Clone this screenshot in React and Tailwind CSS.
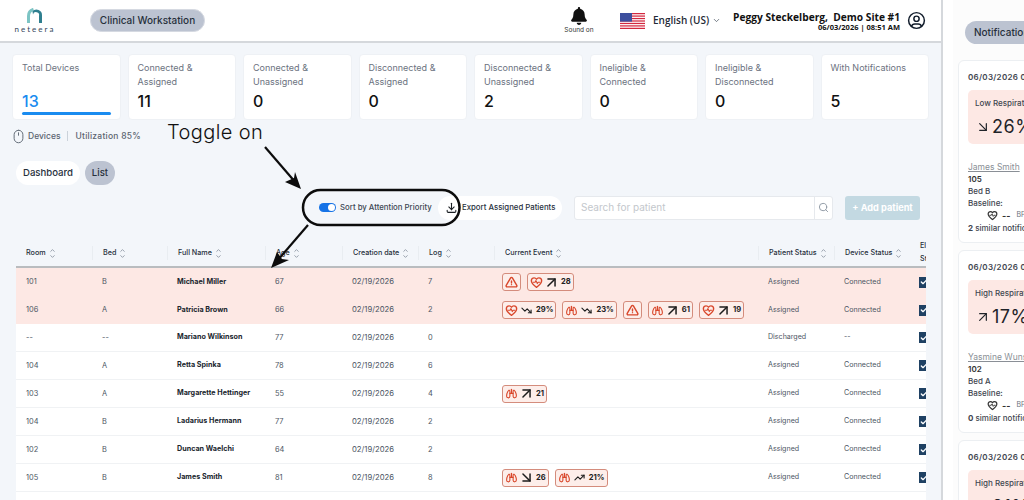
import React from 'react';
import { ArrowUpRight, ArrowDownRight, TrendingDown, TrendingUp, ChevronUp, ChevronDown, Search, Mouse, Check } from 'lucide-react';
import { TbLungs, TbAlertTriangle, TbDownload, TbUserCircle } from 'react-icons/tb';
import { FaBell } from 'react-icons/fa';

const stats = [
    { label: 'Total Devices', value: '13', active: true },
    { label: 'Connected & Assigned', value: '11' },
    { label: 'Connected & Unassigned', value: '0' },
    { label: 'Disconnected & Assigned', value: '0' },
    { label: 'Disconnected & Unassigned', value: '2' },
    { label: 'Ineligible & Connected', value: '0' },
    { label: 'Ineligible & Disconnected', value: '0' },
    { label: 'With Notifications', value: '5' },
];

const columns = ['Room', 'Bed', 'Full Name', 'Age', 'Creation date', 'Log', 'Current Event', 'Patient Status', 'Device Status'];

const rows = [
    { room: '101', bed: 'B', name: 'Michael Miller', age: '67', log: '7', alert: true, status: 'Assigned', device: 'Connected',
      events: [{ icon: 'alert' }, { icon: 'heart', trend: 'up', value: '28' }] },
    { room: '106', bed: 'A', name: 'Patricia Brown', age: '66', log: '2', alert: true, status: 'Assigned', device: 'Connected',
      events: [
          { icon: 'heart', trend: 'fall', value: '29%' },
          { icon: 'lungs', trend: 'fall', value: '23%' },
          { icon: 'alert' },
          { icon: 'lungs', trend: 'up', value: '61' },
          { icon: 'heart', trend: 'up', value: '19' },
      ] },
    { room: '--', bed: '--', name: 'Mariano Wilkinson', age: '77', log: '0', status: 'Discharged', device: '--', events: [] },
    { room: '104', bed: 'A', name: 'Retta Spinka', age: '78', log: '6', status: 'Assigned', device: 'Connected', events: [] },
    { room: '103', bed: 'A', name: 'Margarette Hettinger', age: '55', log: '4', status: 'Assigned', device: 'Connected',
      events: [{ icon: 'lungs', trend: 'up', value: '21' }] },
    { room: '104', bed: 'B', name: 'Ladarius Hermann', age: '77', log: '2', status: 'Assigned', device: 'Connected', events: [] },
    { room: '102', bed: 'B', name: 'Duncan Waelchi', age: '64', log: '2', status: 'Assigned', device: 'Connected', events: [] },
    { room: '105', bed: 'B', name: 'James Smith', age: '81', log: '8', status: 'Assigned', device: 'Connected',
      events: [{ icon: 'lungs', trend: 'down', value: '26' }, { icon: 'lungs', trend: 'rise', value: '21%' }] },
];

const notifications = [
    { date: '06/03/2026 06:30 AM', title: 'Low Respiratory Rate', dir: 'down', value: '26%', name: 'James Smith', room: '105', bed: 'Bed B', similar: '2' },
    { date: '06/03/2026 05:52 AM', title: 'High Respiratory Rate', dir: 'up', value: '17%', name: 'Yasmine Wunsch', room: '102', bed: 'Bed A', similar: '0' },
    { date: '06/03/2026 05:10 AM', title: 'High Respiratory Rate', dir: 'up', value: '21%', name: 'James Smith', room: '105', bed: 'Bed B', similar: '1' },
];

const gridCols = 'grid grid-cols-[76px_75px_98px_77px_76px_76px_264px_76px_76px_16px]';

const Logo = () => (
    <div className="flex flex-col items-center w-[42px]">
        <svg width="17" height="15" viewBox="0 0 17 15">
            <path d="M1.5 15V8a7 7 0 0 1 5-6.7" fill="none" stroke="#7cc4c4" strokeWidth="3" />
            <path d="M5.5 3.2a5.5 5.5 0 0 1 9.5 4V15h-3V8a3 3 0 0 0-6-1.5z" fill="#2f7f8f" />
        </svg>
        <span className="text-[8px] leading-[10px] tracking-[2px] text-[#33475b] mt-[1px] font-['Lato',sans-serif]">neteera</span>
    </div>
);

const Flag = () => (
    <svg width="25" height="16" viewBox="0 0 25 16">
        <rect width="25" height="16" fill="#fff" />
        {[0, 2.46, 4.92, 7.38, 9.84, 12.3, 14.76].map(y => (
            <rect key={y} y={y} width="25" height="1.24" fill="#d3283f" />
        ))}
        <rect width="12" height="8.6" fill="#3c4f9e" />
    </svg>
);

// closed heart with a pulse line through it
const HeartPulseIcon = ({ size = 13, className }) => (
    <svg width={size} height={size} viewBox="0 0 24 24" fill="none" stroke="currentColor" strokeLinecap="round" strokeLinejoin="round" className={className}>
        <path d="M12 21C7 17 2.5 13.5 2.5 8.6 2.5 5.5 5 3.4 7.6 3.4c1.9 0 3.4.9 4.4 2.6 1-1.7 2.5-2.6 4.4-2.6 2.6 0 5.1 2.1 5.1 5.2C21.5 13.5 17 17 12 21z" strokeWidth="2.6" />
        <path d="M6 11.5h3.5l1.5-3 2.5 5.5 1.500-2.500H18" strokeWidth="2" />
    </svg>
);

const SortIcon = () => (
    <span className="inline-flex flex-col ml-[3px] text-[#8b95a1]">
        <ChevronUp size={7} strokeWidth={3} className="-mb-[1px]" />
        <ChevronDown size={7} strokeWidth={3} />
    </span>
);

const EventBadge = ({ event }) => {
    const iconClass = 'text-[#d9472b] shrink-0';
    const arrowProps = { size: 17, strokeWidth: 2.1, className: 'text-[#1c1c1c] shrink-0 -mx-[3px]' };
    const trendProps = { size: 11, strokeWidth: 2.4, className: 'text-[#1c1c1c] shrink-0' };
    return (
        <div className="h-[18px] flex items-center gap-[3px] px-[2px] rounded-[3px] border border-[#d48c7c] bg-[#fdeeea] font-bold text-[7.6px] text-[#222]">
            {event.icon === 'alert' && <TbAlertTriangle size={13} strokeWidth={2.6} className={iconClass} />}
            {event.icon === 'heart' && <HeartPulseIcon size={13} className={iconClass} />}
            {event.icon === 'lungs' && <TbLungs size={13} strokeWidth={2} className={iconClass} />}
            {event.trend === 'up' && <ArrowUpRight {...arrowProps} />}
            {event.trend === 'down' && <ArrowDownRight {...arrowProps} />}
            {event.trend === 'fall' && <TrendingDown {...trendProps} />}
            {event.trend === 'rise' && <TrendingUp {...trendProps} />}
            {event.value && <span className="ml-[1px]">{event.value}</span>}
        </div>
    );
};

const Header = () => (
    <header className="h-[43px] shrink-0 bg-white border-b-2 border-[#d5d8dc] flex items-center pl-[14px] pr-[14px]">
        <Logo />
        <div className="ml-[34px] h-[23px] w-[115px] rounded-full bg-[#bcc3d1] border border-[#d5d9e1] flex items-center justify-center text-[10px] font-medium text-[#27303c]">
            Clinical Workstation
        </div>
        <div className="ml-auto w-[40px] flex flex-col items-center">
            <FaBell size={18} className="text-[#111]" />
            <span className="text-[6.5px] leading-[8px] text-[#333] mt-[1px] whitespace-nowrap">Sound on</span>
        </div>
        <div className="ml-[21px]"><Flag /></div>
        <span className="ml-[8px] text-[10px] font-semibold text-[#1f2a37] whitespace-nowrap font-['Open_Sans',sans-serif]">English (US)</span>
        <ChevronDown size={9} className="ml-[3px] text-[#4b5563]" />
        <div className="ml-[12px] flex flex-col items-end font-['Open_Sans',sans-serif] font-bold text-[#111]">
            <span className="text-[10.2px] leading-[12px] whitespace-nowrap">Peggy Steckelberg,&nbsp; Demo Site #1</span>
            <span className="text-[7.5px] leading-[8px] whitespace-nowrap">06/03/2026 | 08:51 AM</span>
        </div>
        <TbUserCircle size={21} strokeWidth={1.7} className="ml-[6px] text-[#111c2b]" />
    </header>
);

const StatCard = ({ stat }) => (
    <div className="w-[108.5px] h-[66px] bg-white rounded-[4px] border border-[#eef1f5] px-[9px] pt-[6px] relative">
        <div className="h-[27px] text-[9px] leading-[13.5px] text-[#6b7280]">{stat.label}</div>
        <div className={`text-[16px] leading-[17px] font-medium mt-[5px] ${stat.active ? 'text-[#1a8cf0]' : 'text-[#111]'}`}>{stat.value}</div>
        {stat.active && <div className="absolute left-[9px] right-[9px] bottom-[4px] h-[3px] rounded-full bg-[#1a8cf0]" />}
    </div>
);

const Toolbar = () => (
    <div className="mt-[10px] h-[25px] shrink-0 flex items-center">
        <div className="ml-[319px] w-[17px] h-[9px] rounded-full bg-[#1673e6] flex items-center justify-end pr-[1px]">
            <div className="w-[7px] h-[7px] rounded-full bg-white" />
        </div>
        <span className="ml-[4px] w-[98px] text-[7.8px] font-medium text-[#3d4652] whitespace-nowrap">Sort by Attention Priority</span>
        <div className="h-[24px] w-[124px] rounded-full bg-white flex items-center pl-[7px] text-[7.8px] font-medium text-[#27303c] whitespace-nowrap">
            <TbDownload size={13} strokeWidth={2} className="text-[#1b1f24] shrink-0" />
            <span className="ml-[4px]">Export Assigned Patients</span>
        </div>
        <div className="ml-[12px] w-[259px] h-[24px] bg-white border border-[#e6e9ed] rounded-[3px] flex items-center">
            <span className="flex-1 pl-[6px] text-[10px] text-[#c3c7cc]">Search for patient</span>
            <div className="w-[18px] h-full border-l border-[#e6e9ed] flex items-center justify-center">
                <Search size={11} className="text-[#8b95a1]" />
            </div>
        </div>
        <div className="ml-[12px] w-[75px] h-[24px] rounded-[3px] bg-[#c3d9e2] flex items-center justify-center text-[9.2px] font-bold text-white">
            + Add patient
        </div>
    </div>
);

const CheckCell = () => (
    <div className="pl-[9px] overflow-hidden">
        <div className="w-[10px] h-[11px] bg-[#1f4163] flex items-center justify-center">
            <Check size={8} strokeWidth={4} className="text-white" />
        </div>
    </div>
);

const PatientTable = () => (
    <div className="ml-[16px] mt-[20px] w-[910px] flex-1 min-h-0 overflow-hidden">
        <div className={`${gridCols} h-[28px] border-b-2 border-[#b9bcbf] items-center text-[7.2px] font-medium text-[#27303c]`}>
            {columns.map(col => (
                <div key={col} className="pl-[10px] flex items-center whitespace-nowrap border-l border-[#e9edf1] first:border-l-0 h-[14px]">
                    {col}<SortIcon />
                </div>
            ))}
            <div className="pl-[10px] -mt-[2px] text-[7.2px] leading-[13px] h-[26px] overflow-hidden">
                <div>El</div><div>St</div>
            </div>
        </div>
        {rows.map(row => (
            <div key={row.name} className={`${gridCols} h-[28px] items-center text-[7.4px] text-[#4b5563] ${row.alert ? 'bg-[#fde8e4]' : 'bg-white border-b border-[#f0f2f4]'}`}>
                <div className="pl-[10px]">{row.room}</div>
                <div className="pl-[10px]">{row.bed}</div>
                <div className="pl-[10px] text-[7.2px] font-bold text-[#20262e] whitespace-nowrap">{row.name}</div>
                <div className="pl-[10px]">{row.age}</div>
                <div className="pl-[10px] text-[7.7px]">02/19/2026</div>
                <div className="pl-[10px]">{row.log}</div>
                <div className="pl-[8px] flex gap-[6px]">
                    {row.events.map((event, index) => <EventBadge key={index} event={event} />)}
                </div>
                <div className="pl-[10px] text-[7.1px]">{row.status}</div>
                <div className="pl-[10px] text-[7.1px]">{row.device}</div>
                <CheckCell />
            </div>
        ))}
        {/* next row only shows the top of its checkbox in the crop */}
        <div className={`${gridCols} h-[28px] items-center bg-white`}>
            <div className="col-start-10"><CheckCell /></div>
        </div>
    </div>
);

const NotificationCard = ({ item }) => (
    <div className="w-[260px] h-[183px] shrink-0 bg-white rounded-[6px] border border-[#eceff2] pl-[9px] pt-[10px] text-[8px] text-[#3f4650]">
        <div className="font-semibold text-[8px] leading-[12px] tracking-[0.3px] whitespace-nowrap">{item.date}</div>
        <div className="mt-[7px] w-[230px] h-[54px] rounded-[5px] bg-[#fde8e4] pl-[7px] pt-[7px]">
            <div className="text-[8px] leading-[12px] font-medium text-[#3f4650]">{item.title}</div>
            <div className="flex items-center gap-[1px] mt-[7px] text-[#1f2329]">
                {item.dir === 'up' ? <ArrowUpRight size={16} strokeWidth={1.8} /> : <ArrowDownRight size={16} strokeWidth={1.8} />}
                <span className="text-[18px] leading-[22px] tracking-[0.5px]">{item.value}</span>
            </div>
        </div>
        <div className="mt-[17px] text-[8.5px] leading-[12px] text-[#8a8f96] underline whitespace-nowrap">{item.name}</div>
        <div className="text-[8px] leading-[12px] font-semibold text-[#333]">{item.room}</div>
        <div className="text-[8px] leading-[12px] font-medium">{item.bed}</div>
        <div className="text-[8px] leading-[12px] font-medium">Baseline:</div>
        <div className="h-[13px] pl-[19px] flex items-center gap-[4px] text-[#333]">
            <HeartPulseIcon size={11} />
            <span className="font-bold text-[9px]">--</span>
            <span className="text-[7px] ml-[2px] text-[#6b7280]">BPM</span>
        </div>
        <div className="text-[8px] leading-[12px] font-medium whitespace-nowrap"><b>{item.similar}</b> similar notifications</div>
    </div>
);

const NotificationPanel = () => (
    <aside className="flex-1 min-w-0 bg-white pl-[10px] overflow-hidden">
        <div className="w-[300px] h-[500px] bg-[#fcfcfc] pl-[5px] pt-[21px]">
            <div className="ml-[7px] w-[100px] h-[23px] rounded-full bg-[#bcc3d1] flex items-center pl-[9px] text-[10px] font-medium text-[#27303c]">
                Notifications
            </div>
            <div className="mt-[16px] flex flex-col gap-[7px]">
                {notifications.map((item, index) => <NotificationCard key={index} item={item} />)}
            </div>
        </div>
    </aside>
);

// screenshot annotation drawn on top of the page
const Annotation = () => (
    <>
        <div className="absolute left-[167px] top-[118px] text-[20px] leading-[28px] font-light tracking-[0.4px] text-[#111] font-['Inter',sans-serif]">Toggle on</div>
        <svg className="absolute left-0 top-0 pointer-events-none" width="1024" height="500" viewBox="0 0 1024 500" fill="none">
            <rect x="303" y="190" width="156.5" height="35" rx="17.5" stroke="#0c0c0c" strokeWidth="2.5" />
            <path d="M265 147L296 183" stroke="#0c0c0c" strokeWidth="2.2" />
            <path d="M301 189L285 182L294 178L295 172Z" fill="#0c0c0c" />
            <path d="M308 225L277 261" stroke="#0c0c0c" strokeWidth="2.2" />
            <path d="M271 268L277 252L282 259L289 260Z" fill="#0c0c0c" />
        </svg>
    </>
);

const App = () => (
    <div className="relative w-[1024px] h-[500px] overflow-hidden flex font-['Inter',sans-serif] bg-white">
        <main className="w-[943px] h-full shrink-0 flex flex-col bg-[#f3f6fa] border-r-2 border-[#d5d8dc]">
            <Header />
            <div className="mt-[11px] pl-[12px] shrink-0 flex gap-[7px]">
                {stats.map(stat => <StatCard key={stat.label} stat={stat} />)}
            </div>
            <div className="mt-[9px] ml-[11px] h-[14px] shrink-0 flex items-center text-[8.5px] font-medium text-[#5b6470]">
                <Mouse size={15} strokeWidth={1.5} className="text-[#5b6470]" />
                <span className="ml-[2px]">Devices</span>
                <span className="mx-[7px] h-[10px] border-l border-[#cbd2da]" />
                <span className="tracking-[0.25px]">Utilization 85%</span>
            </div>
            <div className="mt-[18px] ml-[16px] h-[24px] shrink-0 flex items-center gap-[5px] text-[9.6px] font-medium text-[#27303c]">
                <div className="w-[64px] h-full rounded-full bg-white flex items-center justify-center">Dashboard</div>
                <div className="w-[30px] h-full rounded-full bg-[#bcc3d1] flex items-center justify-center">List</div>
            </div>
            <Toolbar />
            <PatientTable />
        </main>
        <NotificationPanel />
        <Annotation />
    </div>
);

export default App;
